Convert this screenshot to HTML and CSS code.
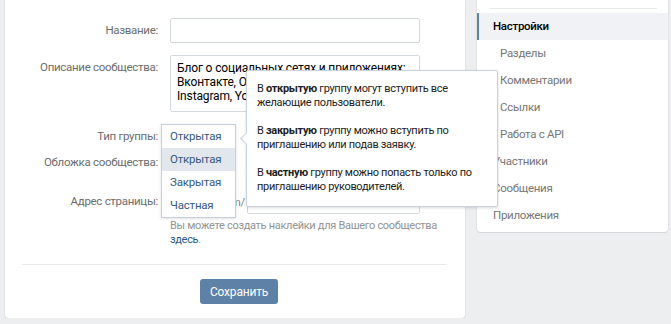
FILE: index.html
```html
<!DOCTYPE html>
<html lang="ru">
<head>
  <meta charset="UTF-8" />
  <title>Управление сообществом</title>
  <link rel="stylesheet" href="styles.css">
</head>
<body>
  <div class="page">
    <div class="card">
      <div class="row">
        <label class="label">Название:</label>
        <input class="field" type="text" />
      </div>

      <div class="row">
        <label class="label">Описание сообщества:</label>
        <textarea class="field area" wrap="off">Блог о социальных сетях и приложениях:
Вконтакте, Одноклассники, Facebook,
Instagram, YouTube.</textarea>
      </div>

      <div class="row">
        <label class="label">Тип группы:</label>
        <div class="select">
          <div class="dropdown">
            <div class="option">Открытая</div>
            <div class="option hover">Открытая</div>
            <div class="option">Закрытая</div>
            <div class="option">Частная</div>
          </div>
        </div>
      </div>

      <div class="row short">
        <label class="label">Обложка сообщества:</label>
        <a class="link" href="#">Загрузить</a>
      </div>

      <div class="row address">
        <label class="label">Адрес страницы:</label>
        <div>
          <div class="address-box">
            <span class="prefix">https://vk.com/</span>
            <input class="field addr" type="text" value="club" />
          </div>
          <div class="hint">Вы можете создать наклейки для Вашего сообщества<br><a class="link" href="#">здесь</a>.</div>
        </div>
      </div>

      <div class="divider"></div>

      <div class="actions">
        <button class="save-button">Сохранить</button>
      </div>

      <!-- tooltip over the form -->
      <div class="tip">
        <p>В <b>открытую</b> группу могут вступить все желающие пользователи.</p>
        <p>В <b>закрытую</b> группу можно вступить по приглашению или подав заявку.</p>
        <p>В <b>частную</b> группу можно попасть только по приглашению руководителей.</p>
      </div>
    </div>

    <div class="menu">
      <div class="menu-sep"></div>
      <a class="menu-item active" href="#">Настройки</a>
      <a class="menu-item sub" href="#">Разделы</a>
      <a class="menu-item sub" href="#">Комментарии</a>
      <a class="menu-item sub" href="#">Ссылки</a>
      <a class="menu-item sub" href="#">Работа с API</a>
      <a class="menu-item" href="#">Участники</a>
      <a class="menu-item" href="#">Сообщения</a>
      <a class="menu-item" href="#">Приложения</a>
    </div>
  </div>
</body>
</html>
```

FILE: styles.css
```css
* { box-sizing: border-box; }
body {
  margin: 0;
  background: #edeef0;
  font-family: Roboto, "Open Sans", sans-serif;
  font-size: 11.5px;
  letter-spacing: -0.3px;
  color: #000;
}
.page {
  display: flex;
  align-items: flex-start;
  gap: 12px;
  padding-left: 5px;
}
.card {
  position: relative;
  z-index: 2;
  width: 460px;
  background: #fff;
  border-radius: 0 0 4px 4px;
  box-shadow: 0 1px 0 0 #d7d8db, 0 0 0 1px #e3e4e8;
  padding: 18px 0 14px;
}

.row {
  display: grid;
  grid-template-columns: 153px 1fr;
  column-gap: 12px;
  align-items: start;
  margin-top: 12px;
}
.row:first-child { margin-top: 0; }
.row.short { margin-top: 1px; }
.row.address { margin-top: 15px; }
.label {
  text-align: right;
  color: #6d6d6d;
  line-height: 25px;
}
.row.short .label { line-height: 24px; }

.field {
  display: block;
  width: 250px;
  height: 25px;
  border: 1px solid #d3d9de;
  border-radius: 2px;
  padding: 0 6px;
  font: inherit;
  letter-spacing: inherit;
  color: #000;
  background: #fff;
}
.area {
  height: 57px;
  padding: 5px 6px;
  font-size: 12px;
  letter-spacing: -0.15px;
  line-height: 14px;
  resize: none;
  overflow: hidden;
}

.select {
  position: relative;
  height: 24px;
}
.dropdown {
  position: absolute;
  left: -9px;
  top: 0;
  width: 75px;
  background: #fff;
  border: 1px solid #c5d0db;
  box-shadow: 0 1px 3px rgba(0,0,0,0.12);
  z-index: 3;
}
.option {
  height: 23px;
  line-height: 23px;
  padding-left: 8px;
  color: #35597f;
  letter-spacing: -0.2px;
}
.option.hover {
  background: #e1e7ed;
}

.link {
  color: #2a5885;
  text-decoration: none;
  line-height: 24px;
}
.address-box {
  display: flex;
  align-items: center;
  width: 250px;
}
.prefix {
  color: #828282;
  width: 77px;
  text-align: right;
  padding-right: 2px;
}
.addr {
  width: auto;
  flex-grow: 1;
}
.hint {
  margin-top: 5px;
  font-size: 11px;
  letter-spacing: -0.3px;
  line-height: 14px;
  white-space: nowrap;
  color: #939393;
}
.hint .link { line-height: 14px; }

.divider {
  height: 1px;
  background: #e7e8ec;
  margin: 17px 18px 0 17px;
}
.actions {
  padding: 14px 0 0 195px;
}
.save-button {
  width: 78px;
  height: 25px;
  border: none;
  border-radius: 3px;
  background: #5e81a8;
  color: #fff;
  font: inherit;
  font-size: 12px;
  letter-spacing: -0.2px;
  cursor: pointer;
}

.tip {
  position: absolute;
  left: 241px;
  top: 70px;
  width: 252px;
  z-index: 4;
  background: #fff;
  border: 1px solid #c9d2dc;
  border-radius: 2px;
  box-shadow: 0 1px 3px rgba(0,0,0,0.15);
  padding: 11px 10px 12px;
  font-size: 11px;
  color: #222;
}
.tip::before {
  content: "";
  position: absolute;
  left: -5px;
  top: 63px;
  width: 8px;
  height: 8px;
  background: #fff;
  border-left: 1px solid #c9d2dc;
  border-bottom: 1px solid #c9d2dc;
  transform: rotate(45deg);
}
.tip p {
  margin: 0 0 14px;
  line-height: 14px;
}
.tip p:last-child { margin-bottom: 0; }

.menu {
  width: 191px;
  background: #fff;
  border-radius: 0 0 4px 4px;
  box-shadow: 0 1px 0 0 #d7d8db, 0 0 0 1px #e3e4e8;
  padding: 8px 0 3px;
}
.menu-sep {
  height: 1px;
  background: #e7e8ec;
  margin: 0 11px 4px 13px;
}
.menu-item {
  display: block;
  height: 27px;
  line-height: 27px;
  padding-left: 16px;
  color: #777;
  text-decoration: none;
}
.menu-item.sub { padding-left: 23px; }
.menu-item.active {
  background: #f0f2f5;
  border-left: 2px solid #5e81a8;
  padding-left: 14px;
  color: #000;
  font-weight: 500;
}
```
